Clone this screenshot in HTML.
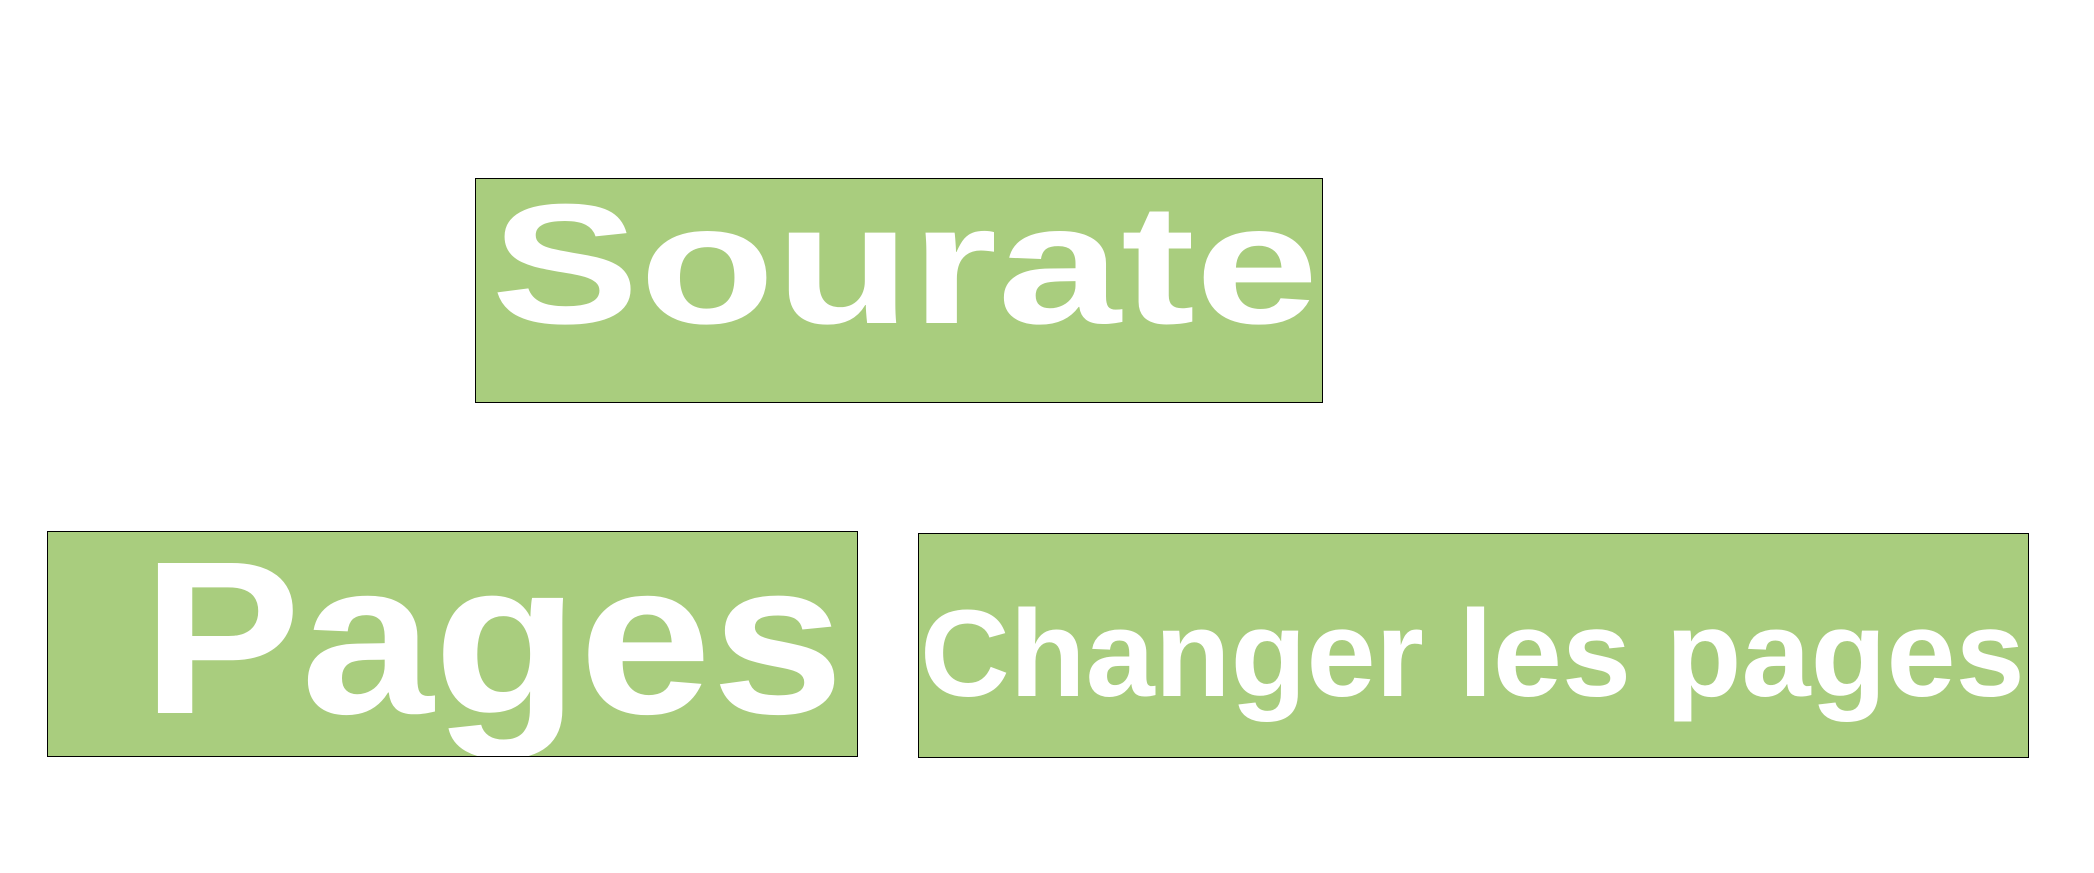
<!DOCTYPE html>
<html><head><meta charset="utf-8"><style>
body{margin:0;width:2094px;height:873px;background:#fff;position:relative;overflow:hidden;font-family:"Liberation Sans",sans-serif}
.b{position:absolute;background:#a9cd7e;border:1px solid #000;box-sizing:border-box;overflow:hidden}
.t{position:absolute;color:#fff;font-weight:bold;line-height:1;white-space:nowrap;transform-origin:0 0}
</style></head><body>
<div class="b" style="left:475px;top:178px;width:848px;height:225px">
<div class="t" style="left:15px;top:0px;font-size:171px;transform:scaleX(1.3)">Sourate</div></div>
<div class="b" style="left:47px;top:531px;width:811px;height:226px">
<div class="t" style="left:94px;top:-2px;font-size:218px;transform:scaleX(1.093)">Pages</div></div>
<div class="b" style="left:918px;top:533px;width:1111px;height:225px">
<div class="t" style="left:1px;top:59px;font-size:123px;transform:scaleX(1.01)">Changer les pages</div></div>
</body></html>
